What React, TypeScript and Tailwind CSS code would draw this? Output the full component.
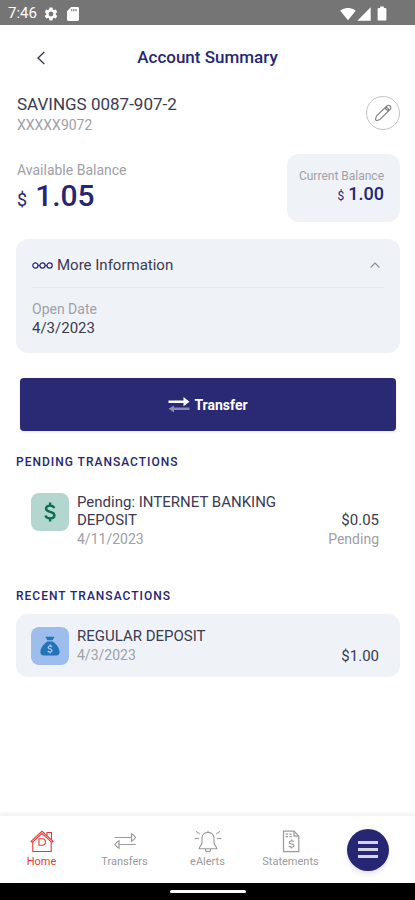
import { useState } from "react";
import type { ReactNode } from "react";
import { MdSettings, MdSignalCellular4Bar, MdSignalWifi4Bar } from "react-icons/md";

function StatusBar() {
  return (
    <div className="flex h-[25px] items-center justify-between bg-[#757575] pt-0.5 pr-7 pl-2 text-white">
      <div className="flex items-center">
        <span className="text-[15px] leading-none">7:46</span>
        <MdSettings className="ml-1.5 size-4" />
        <svg viewBox="0 0 12 14" className="ml-2 h-3.5 w-3" fill="currentColor">
          <path
            fillRule="evenodd"
            d="M4.2 0H10.6A1.4 1.4 0 0 1 12 1.4V12.6A1.4 1.4 0 0 1 10.6 14H1.4A1.4 1.4 0 0 1 0 12.6V4.2ZM4.2 2V4.2H5.3V2ZM6.3 2V4.2H7.4V2ZM8.4 2V4.2H9.5V2Z"
          />
        </svg>
      </div>
      <div className="flex items-center">
        <MdSignalWifi4Bar className="size-4" />
        <MdSignalCellular4Bar className="size-4" />
        <svg viewBox="0 0 10 15" className="ml-[5px] h-[15px] w-2.5" fill="currentColor">
          <path d="M3.2.4H6.8V1.9H8.2A1.2 1.2 0 0 1 9.4 3.1V13.4A1.2 1.2 0 0 1 8.2 14.6H1.8A1.2 1.2 0 0 1 .6 13.4V3.1A1.2 1.2 0 0 1 1.8 1.9H3.2Z" />
        </svg>
      </div>
    </div>
  );
}

function HomeIcon() {
  return (
    <svg viewBox="0 0 24 24" className="size-6" fill="none" stroke="currentColor" strokeWidth="1.1">
      <path d="M1 11.3 12 1.3 23 11.3 21.8 12.3 12 3.5 2.2 12.3Z" />
      <path d="M2.8 11.7V21.5H21.2V11.7" />
      <path d="M17 5.4V2.5H21.5V9.8" />
      <path d="M9 8.8H12.2A3.2 3.2 0 0 1 12.2 15.2H9Z" />
    </svg>
  );
}

function TransfersIcon() {
  return (
    <svg viewBox="0 0 24 24" className="size-6" fill="none" stroke="currentColor" strokeWidth="1.2">
      <path d="M1.5 7.5H18.5M18.5 3.8C20 4.6 21.6 6 22.6 7.5 21.6 9 20 10.4 18.5 11.2Z" />
      <path d="M22.8 14.5H6M6 10.8C4.4 11.6 2.8 13 1.8 14.5 2.8 16 4.4 17.4 6 18.2Z" />
    </svg>
  );
}

function AlertsIcon() {
  return (
    <svg viewBox="0 0 28 24" className="h-6 w-7" fill="none" stroke="currentColor" strokeWidth="1.1" strokeLinecap="round">
      <path d="M14 1V2.4M14 2.4C10.2 2.4 8 5 8 8.4V12.7C8 15.4 5.2 16.2 5.2 18.8H22.8C22.8 16.2 20 15.4 20 12.7V8.4C20 5 17.8 2.4 14 2.4Z" />
      <path d="M11.4 19.2A2.6 2.6 0 0 0 16.6 19.2" />
      <path d="M5.4 3.6 2.4 1.6M4.6 8.2 1.2 8.6M22.6 3.6 25.6 1.6M23.4 8.2 26.8 8.6" />
    </svg>
  );
}

function StatementsIcon() {
  return (
    <svg viewBox="0 0 24 24" className="size-6" fill="none" stroke="currentColor" strokeWidth="1.2">
      <path d="M4.5 1.2H15L19.8 6.2V21.6H4.5Z" />
      <path d="M15 1.2V6.2H19.8M6.6 4.2H9M10.4 4.2H12.8M6.6 6.6H9M10.4 6.6H12.8" />
      <path d="M14.8 11.8C14.3 10.8 10.2 10.4 10.2 12.4S15 13.4 15 15.6 10.4 17.2 9.8 15.8M12.5 9.4V11M12.5 16.8V18.6" />
    </svg>
  );
}

function NavItem({ label, active, children }: { label: string; active?: boolean; children: ReactNode }) {
  return (
    <a
      href="#"
      className={`flex flex-col items-center text-[11px] leading-4 ${
        active ? "text-[#e53935]" : "text-[#9a9a9a]"
      }`}
    >
      {children}
      <span>{label}</span>
    </a>
  );
}

function BottomNav() {
  return (
    <nav className="grid h-[68px] grid-cols-5 items-center border-t border-gray-100 bg-white shadow-[0_-2px_3px_rgba(0,0,0,0.06)]">
      <NavItem label="Home" active>
        <HomeIcon />
      </NavItem>
      <NavItem label="Transfers">
        <TransfersIcon />
      </NavItem>
      <NavItem label="eAlerts">
        <AlertsIcon />
      </NavItem>
      <NavItem label="Statements">
        <StatementsIcon />
      </NavItem>
      <div className="flex justify-center pr-3">
        <button
          type="button"
          aria-label="Menu"
          className="flex size-[42px] flex-col items-center justify-center gap-1 rounded-full bg-[#262673] shadow-md"
        >
          <span className="h-[3px] w-5 bg-[#d4d4ec]" />
          <span className="h-[3px] w-5 bg-[#d4d4ec]" />
          <span className="h-[3px] w-5 bg-[#d4d4ec]" />
        </button>
      </div>
    </nav>
  );
}

export default function App() {
  const [open, setOpen] = useState(true);

  return (
    <div className="flex min-h-screen flex-col bg-white font-[Roboto,sans-serif] text-[#3a3a52]">
      <StatusBar />

      <header className="grid h-[66px] grid-cols-[50px_1fr_50px] items-center px-4">
        <button type="button" aria-label="Back" className="flex justify-center text-[#33334f]">
          <svg viewBox="0 0 8 14" className="h-3.5 w-2" fill="none" stroke="currentColor" strokeWidth="1.3">
            <path d="M7.3 1 1 7l6.3 6" />
          </svg>
        </button>
        <h1 className="text-center text-[17px] font-medium text-[#262673]">Account Summary</h1>
      </header>

      <main className="flex-1 pr-[15px] pl-4">
        <section className="flex items-center justify-between pt-px pl-px">
          <div>
            <h2 className="text-[17px] leading-6">SAVINGS 0087-907-2</h2>
            <p className="text-sm leading-[18px] text-[#a0a0a6]">XXXXX9072</p>
          </div>
          <button
            type="button"
            aria-label="Edit account"
            className="flex size-[34px] items-center justify-center rounded-full border border-[#c4c4c8] text-[#77777d]"
          >
            <svg viewBox="0 0 18 18" className="size-[18px]" fill="none" stroke="currentColor" strokeWidth="1.1" strokeLinejoin="round">
              <path d="M1.6 15.2 2.4 12.2 12.6 2.2A2.2 2.2 0 0 1 16.2 5.4L6 15.4 2.8 16.4A1 1 0 0 1 1.6 15.2Z" />
              <path d="M10.8 4 14.2 7.2M12 2.8 15.4 6" />
            </svg>
          </button>
        </section>

        <section className="mt-5 flex items-start justify-between pl-px">
          <div className="pt-2">
            <p className="text-sm leading-4 text-[#a0a0a6]">Available Balance</p>
            <p className="flex items-baseline gap-2 font-medium text-[#262673]">
              <span className="text-lg font-normal">$</span>
              <span className="text-3xl">1.05</span>
            </p>
          </div>
          <div className="rounded-xl bg-[#eff3f8] pt-3.5 pr-4 pb-[18px] pl-3 text-right">
            <p className="text-xs leading-4 text-[#a0a0a6]">Current Balance</p>
            <p className="flex items-baseline justify-end gap-1 font-medium text-[#262673]">
              <span className="text-xs font-normal">$</span>
              <span className="text-lg leading-5">1.00</span>
            </p>
          </div>
        </section>

        <section className="mt-[17px] rounded-xl bg-[#eff3f8] px-4 pt-1 pb-[15px]">
          <button
            type="button"
            aria-expanded={open}
            onClick={() => setOpen(!open)}
            className="flex h-[45px] w-full items-center justify-between border-b border-[#e4e8ec] text-[15px]"
          >
            <span className="flex items-center gap-1">
              <svg viewBox="0 0 21 8" className="h-2 w-[21px] text-[#262673]" fill="none" stroke="currentColor" strokeWidth="1.2">
                <circle cx="3.4" cy="4.5" r="2.6" />
                <circle cx="10.5" cy="4.5" r="2.6" />
                <circle cx="17.6" cy="4.5" r="2.6" />
                <path d="M6 4.5H7.9M13.1 4.5H15" />
              </svg>
              More Information
            </span>
            <svg viewBox="0 0 10 6" className={`mr-1 h-1.5 w-2.5 text-[#8c8c90] ${open ? "" : "rotate-180"}`} fill="none" stroke="currentColor" strokeWidth="1.1">
              <path d="M.6 5.5 5 1l4.4 4.5" />
            </svg>
          </button>
          {open && (
            <dl className="mt-3">
              <dt className="text-sm leading-[18px] text-[#a0a0a6]">Open Date</dt>
              <dd className="text-[15px] leading-5">4/3/2023</dd>
            </dl>
          )}
        </section>

        <button
          type="button"
          className="mx-auto mt-[25px] flex h-[53px] w-[98%] items-center justify-center gap-1 rounded bg-[#2a2a74] text-sm font-bold text-white shadow-sm"
        >
          <svg viewBox="0 0 22 18" className="h-[18px] w-[22px]" fill="currentColor">
            <path d="M.5 4.4H15.5V1L21.5 5.7 15.5 10.2V7H.5Z" />
            <path d="M21.5 11.6H6V9.4L.5 12.8 6 16.6V14H21.5Z" opacity=".45" />
          </svg>
          Transfer
        </button>

        <section className="mt-[23px]">
          <h3 className="text-xs leading-4 font-medium tracking-[1px] text-[#262673]">PENDING TRANSACTIONS</h3>
          <div className="mt-3 flex gap-2 py-[11px] pr-[21px] pl-[15px]">
            <div className="flex size-[38px] shrink-0 items-center justify-center rounded-lg bg-[#b3d6cf] text-[#0c6b50]">
              <svg viewBox="0 0 12 20" className="h-5 w-3" fill="none" stroke="currentColor" strokeWidth="2.4">
                <path d="M10.3 6.2C9.6 4.2 7.8 3.6 6 3.6 3.6 3.6 2 4.8 2 6.6 2 11 10.4 8.8 10.4 13.3 10.4 15.2 8.6 16.4 6.1 16.4 3.8 16.4 2 15.4 1.5 13.5M6.1.6V4M6.1 16V19.4" />
              </svg>
            </div>
            <div className="flex-1">
              <p className="text-[15px] leading-[18px]">Pending: INTERNET BANKING DEPOSIT</p>
              <p className="text-sm leading-5 text-[#a0a0a6]">4/11/2023</p>
            </div>
            <div className="self-end text-right">
              <p className="text-[15px] leading-[18px]">$0.05</p>
              <p className="text-sm leading-5 text-[#a0a0a6]">Pending</p>
            </div>
          </div>
        </section>

        <section className="mt-7">
          <h3 className="text-xs leading-4 font-medium tracking-[1px] text-[#262673]">RECENT TRANSACTIONS</h3>
          <div className="mt-2.5 flex items-center gap-2 rounded-xl bg-[#eff3f8] pt-[13px] pr-[21px] pb-3 pl-[15px]">
            <div className="flex size-[38px] shrink-0 items-center justify-center rounded-lg bg-[#9dbdec]">
              <svg viewBox="0 0 20 20" className="size-5">
                <path d="M5.5.8H14.5L12.6 4.2H7.4Z" fill="#2273b8" />
                <path d="M7.2 5.4H12.8C16 7.5 19.6 12 19.6 16A3.4 3.4 0 0 1 16.2 19.4H3.8A3.4 3.4 0 0 1 .4 16C.4 12 4 7.5 7.2 5.4Z" fill="#2273b8" />
                <path d="M12 10.8C11 9.6 8.2 9.8 8.2 11.4S12 12.9 12 14.6 9.2 16.6 7.8 15M10.1 8.6V10.2M10.1 16V17.4" fill="none" stroke="#a9c8f2" strokeWidth="1.3" />
              </svg>
            </div>
            <div className="flex-1">
              <p className="text-[15px] leading-[18px]">REGULAR DEPOSIT</p>
              <p className="text-sm leading-5 text-[#a0a0a6]">4/3/2023</p>
            </div>
            <p className="self-end text-[15px] leading-[18px]">$1.00</p>
          </div>
        </section>
      </main>

      <BottomNav />
      <div className="flex h-[17px] items-center justify-center bg-black">
        <span className="h-[3px] w-[76px] rounded-full bg-white" />
      </div>
    </div>
  );
}
